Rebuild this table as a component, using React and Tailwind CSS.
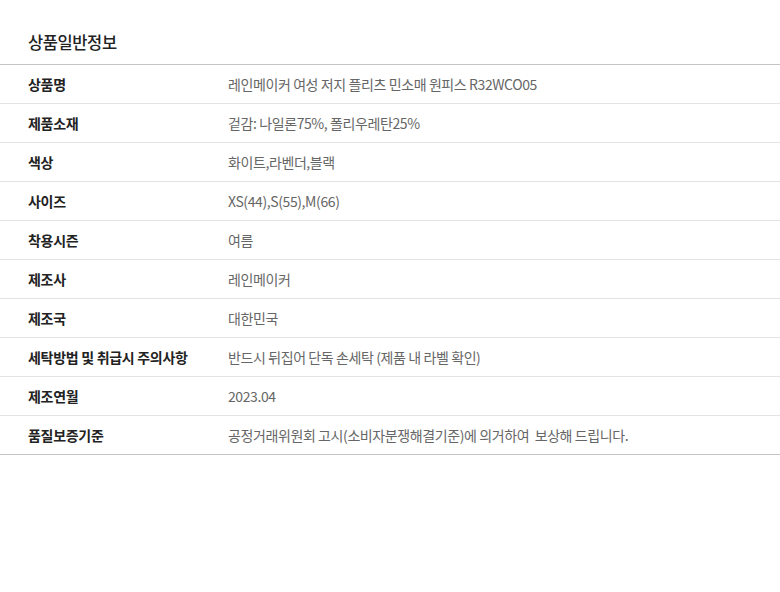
export default function App() {
  const rows = [
    ["상품명", "레인메이커 여성 저지 플리츠 민소매 원피스 R32WCO05"],
    ["제품소재", "겉감: 나일론75%, 폴리우레탄25%"],
    ["색상", "화이트,라벤더,블랙"],
    ["사이즈", "XS(44),S(55),M(66)"],
    ["착용시즌", "여름"],
    ["제조사", "레인메이커"],
    ["제조국", "대한민국"],
    ["세탁방법 및 취급시 주의사항", "반드시 뒤집어 단독 손세탁 (제품 내 라벨 확인)"],
    ["제조연월", "2023.04"],
    ["품질보증기준", "공정거래위원회 고시(소비자분쟁해결기준)에 의거하여  보상해 드립니다."],
  ];
  return (
    <div
      className="w-[780px] h-[592px] bg-white"
      style={{ fontFamily: '"Noto Sans CJK KR", "Noto Sans", sans-serif' }}
    >
      <div className="h-[64px] flex items-center pl-[28px] pt-[20px]">
        <h2 className="text-[16.5px] font-medium text-[#222] tracking-[-0.4px]">상품일반정보</h2>
      </div>
      <div className="border-t border-b border-[#c4c4c4]">
        {rows.map(([k, v], i) => (
          <div
            key={i}
            className={`flex items-center ${i > 0 ? "h-[39px] border-t border-[#e3e3e3]" : "h-[38px]"}`}
          >
            <div className="w-[228px] shrink-0 pl-[28px] text-[14px] font-bold text-[#222] tracking-[-0.3px]">{k}</div>
            <div className="text-[14px] text-[#666] tracking-[-0.4px] whitespace-pre">{v}</div>
          </div>
        ))}
      </div>
    </div>
  );
}
